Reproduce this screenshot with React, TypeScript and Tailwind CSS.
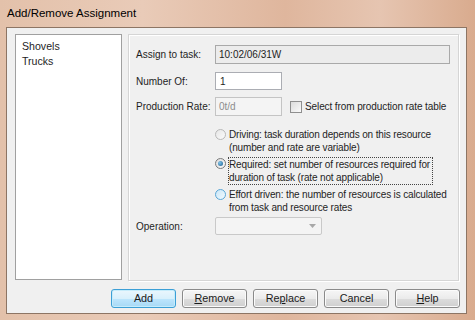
import React from "react";

const font = { fontFamily: '"Liberation Sans", Arial, sans-serif' };

function Radio({ checked, tone }: { checked?: boolean; tone: "disabled" | "normal" | "hover" }) {
  const ring =
    tone === "disabled"
      ? "border-[#b8b8b8] bg-[linear-gradient(135deg,#e6e6e6,#fbfbfb)]"
      : tone === "hover"
        ? "border-[#5aa6d6] bg-[linear-gradient(135deg,#c9e6f7,#f2fafe)]"
        : "border-[#7a7a7a] bg-[linear-gradient(135deg,#dcdcdc,#fbfbfb)]";
  return (
    <span className={`mt-[1px] flex h-[11px] w-[11px] shrink-0 items-center justify-center rounded-full border ${ring}`}>
      {checked && <span className="h-[5px] w-[5px] rounded-full bg-[radial-gradient(circle_at_35%_35%,#7fc4ea,#1c5e8f)]" />}
    </span>
  );
}

function Btn({ children, primary }: { children: React.ReactNode; primary?: boolean }) {
  return (
    <div
      className={`flex h-[19px] w-[65px] items-center justify-center rounded-[3px] border text-[10.8px] text-[#1a1a1a] ${
        primary
          ? "border-[#3c9fd6] bg-[linear-gradient(#eaf6fd,#d9f0fc_50%,#bee6fd_50%,#a7d9f5)] shadow-[inset_0_0_0_1px_#c6ecfb]"
          : "border-[#8a8a8a] bg-[linear-gradient(#f6f6f6,#ebebeb_50%,#dddddd_50%,#cfcfcf)] shadow-[inset_0_0_0_1px_#fbfbfb]"
      }`}
    >
      {children}
    </div>
  );
}

export default function App() {
  return (
    <div
      className="flex h-[320px] w-[475px] flex-col whitespace-nowrap bg-[linear-gradient(90deg,#e3c1aa,#e9cbb8_30%,#dfb69d_60%,#e6c5b1_80%,#d9ab8e)] text-[10px] text-[#1e1e1e]"
      style={font}
    >
      <div className="flex h-[27px] shrink-0 items-center pl-[7px] pt-[1px] text-[11.5px] text-black">Add/Remove Assignment</div>
      <div className="mb-[6px] ml-[6px] mr-[8px] flex min-h-0 flex-1 flex-col border border-[#8d7564] bg-[#f0f0f0]">
        <div className="flex h-[253px] gap-[6px] pl-[8px] pt-[6px]">
          <div className="flex h-[246px] w-[107px] flex-col border border-[#a0a0a0] bg-white px-[6px] pt-[4px] text-[10.6px] leading-[15px]">
            <div>Shovels</div>
            <div>Trucks</div>
          </div>
          <div className="h-[247px] w-[331px] border border-[#d5d5d5] pl-[7px] pt-[10px] shadow-[inset_1px_1px_0_#ffffff,1px_1px_0_#ffffff]">
            <div className="flex items-center">
              <div className="w-[79px]">Assign to task:</div>
              <div className="flex h-[19px] w-[235px] items-center border border-[#a9a9a9] bg-[#ececec] pl-[3px]">10:02/06/31W</div>
            </div>
            <div className="mt-[8px] flex items-center">
              <div className="w-[79px]">Number Of:</div>
              <div className="flex h-[18px] w-[67px] items-center border border-[#abadb3] bg-white pl-[4px]">1</div>
            </div>
            <div className="mt-[7px] flex items-center">
              <div className="w-[79px]">Production Rate:</div>
              <div className="flex h-[19px] w-[67px] items-center border border-[#c4c4c4] bg-[#f4f4f4] pl-[3px] text-[#8d8d8d]">0t/d</div>
              <span className="ml-[8px] mr-[3px] h-[12px] w-[12px] border border-[#8f8f8f] bg-[linear-gradient(135deg,#dcdcdc,#fafafa)]" />
              <span className="tracking-[-0.1px]">Select from production rate table</span>
            </div>
            <div className="ml-[79px] mt-[12px] flex flex-col gap-[3px] leading-[13px] tracking-[-0.15px]">
              <div className="flex items-start gap-[3px]">
                <Radio tone="disabled" />
                <div>
                  <div>Driving: task duration depends on this resource</div>
                  <div>(number and rate are variable)</div>
                </div>
              </div>
              <div className="flex items-start gap-[2px]">
                <Radio tone="normal" checked />
                <div className="border border-dotted border-[#444] pr-[2px]">
                  <div>Required: set number of resources required for</div>
                  <div>duration of task (rate not applicable)</div>
                </div>
              </div>
              <div className="flex items-start gap-[3px]">
                <Radio tone="hover" />
                <div>
                  <div>Effort driven: the number of resources is calculated</div>
                  <div>from task and resource rates</div>
                </div>
              </div>
            </div>
            <div className="mt-[3px] flex items-center">
              <div className="w-[79px]">Operation:</div>
              <div className="flex h-[18px] w-[107px] items-center justify-end rounded-[2px] border border-[#c9c9c9] bg-[#f4f4f4] pr-[5px]">
                <svg width="7" height="4" viewBox="0 0 7 4">
                  <path d="M0 0h7L3.5 4z" fill="#a8a8a8" />
                </svg>
              </div>
            </div>
          </div>
        </div>
        <div className="flex gap-[6px] pl-[104px] pt-[8px]">
          <Btn primary>Add</Btn>
          <Btn>
            <span className="underline">R</span>emove
          </Btn>
          <Btn>
            Re<span className="underline">p</span>lace
          </Btn>
          <Btn>Cancel</Btn>
          <Btn>
            <span className="underline">H</span>elp
          </Btn>
        </div>
      </div>
    </div>
  );
}
